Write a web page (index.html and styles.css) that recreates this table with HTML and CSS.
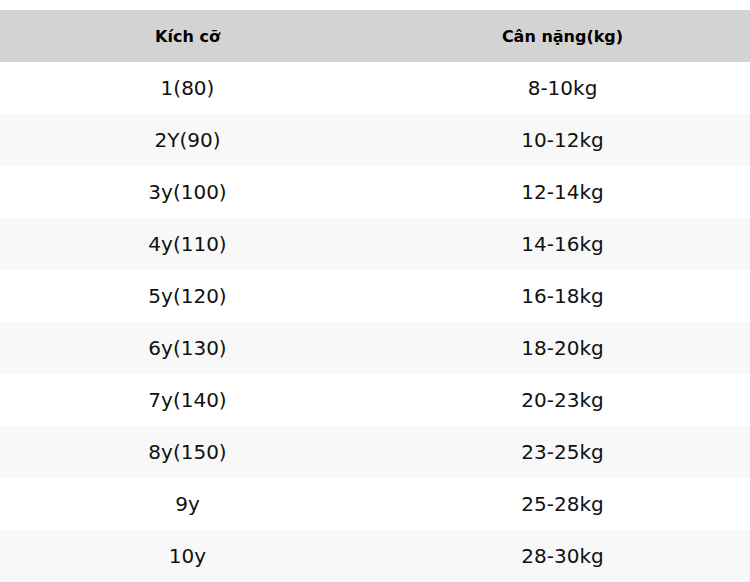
FILE: index.html
```html
<!DOCTYPE html>
<html lang="vi">
<head>
<meta charset="utf-8">
<link rel="stylesheet" href="styles.css">
</head>
<body>
<table class="size-table">
  <thead>
    <tr><th>Kích cỡ</th><th>Cân nặng(kg)</th></tr>
  </thead>
  <tbody>
    <tr><td>1(80)</td><td>8-10kg</td></tr>
    <tr><td>2Y(90)</td><td>10-12kg</td></tr>
    <tr><td>3y(100)</td><td>12-14kg</td></tr>
    <tr><td>4y(110)</td><td>14-16kg</td></tr>
    <tr><td>5y(120)</td><td>16-18kg</td></tr>
    <tr><td>6y(130)</td><td>18-20kg</td></tr>
    <tr><td>7y(140)</td><td>20-23kg</td></tr>
    <tr><td>8y(150)</td><td>23-25kg</td></tr>
    <tr><td>9y</td><td>25-28kg</td></tr>
    <tr><td>10y</td><td>28-30kg</td></tr>
  </tbody>
</table>
</body>
</html>
```
FILE: styles.css
```css
html, body {
  margin: 0;
  padding: 0;
  background: #ffffff;
}
body {
  font-family: "DejaVu Sans", sans-serif;
  color: #111111;
}
.size-table {
  margin-top: 10px;
  width: 750px;
  border-collapse: collapse;
  table-layout: fixed;
}
.size-table th,
.size-table td {
  padding: 0;
  text-align: center;
  vertical-align: middle;
  height: 52px;
}
.size-table th {
  background: #d3d3d3;
  font-weight: bold;
  font-size: 16px;
  color: #000000;
}
.size-table td {
  font-size: 20px;
}
.size-table tbody tr:nth-child(even) td {
  background: #f8f8f8;
}
```
